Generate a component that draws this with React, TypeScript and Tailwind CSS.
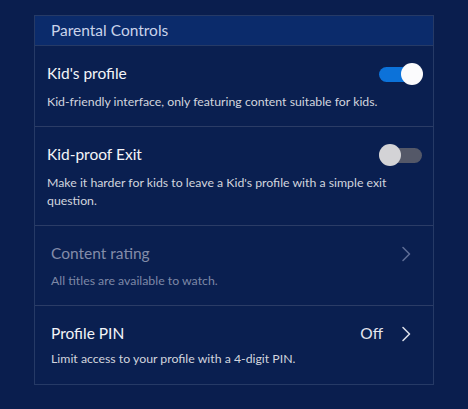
import React from "react";

function Chevron({ dim }: { dim?: boolean }) {
  return (
    <svg width="10" height="16" viewBox="0 0 10 16" fill="none" className="shrink-0">
      <path d="M2 1.5 L8.5 8 L2 14.5" stroke={dim ? "#5d6c94" : "#d9dce6"} strokeWidth="1.6" strokeLinecap="round" strokeLinejoin="round" />
    </svg>
  );
}

function Toggle({ on }: { on: boolean }) {
  return (
    <div className="relative w-[44px] h-[22px] shrink-0">
      <div className={`absolute left-0 right-[1px] top-[4px] h-[15px] rounded-full ${on ? "bg-[#0c72d9]" : "bg-[#545868]"}`} />
      <div className={`absolute top-0 w-[22px] h-[22px] rounded-full ${on ? "right-0 bg-[#fbfbfd]" : "left-0 bg-[#d3d3d6]"}`} />
    </div>
  );
}

export default function App() {
  return (
    <div className="w-[468px] h-[409px] bg-[#0a1e4e] pt-[15px] pl-[34px]" style={{ fontFamily: "Lato, 'Noto Sans', sans-serif" }}>
      <div className="w-[400px] border border-[#263a66] bg-[#0a1f50]">
        <div className="h-[30px] bg-[#0b2b6b] border-b border-[#263a66] flex items-center pl-[16px] text-[15.5px] text-[#c9d3ea]">
          Parental Controls
        </div>
        <div className="h-[81px] border-b border-[#2b3c66] pl-[12px] pr-[10px] pt-[18px]">
          <div className="flex items-center justify-between h-[20px]">
            <span className="text-[15.5px] text-[#f4f5f8]">Kid's profile</span>
            <Toggle on={true} />
          </div>
          <div className="mt-[9px] text-[12.3px] leading-[18px] text-[#d2d5de]">
            Kid-friendly interface, only featuring content suitable for kids.
          </div>
        </div>
        <div className="h-[99px] border-b border-[#2b3c66] pl-[12px] pr-[10px] pt-[18px]">
          <div className="flex items-center justify-between h-[20px]">
            <span className="text-[15.5px] text-[#f4f5f8]">Kid-proof Exit</span>
            <Toggle on={false} />
          </div>
          <div className="mt-[9px] text-[12.3px] leading-[18px] text-[#d2d5de] pr-[30px]">
            Make it harder for kids to leave a Kid's profile with a simple exit question.
          </div>
        </div>
        <div className="h-[80px] border-b border-[#2b3c66] pl-[16px] pr-[22px] pt-[18px]">
          <div className="flex items-center justify-between h-[20px]">
            <span className="text-[15.5px] text-[#838ca9]">Content rating</span>
            <Chevron dim />
          </div>
          <div className="mt-[8px] text-[12.3px] leading-[18px] text-[#7e88a6]">
            All titles are available to watch.
          </div>
        </div>
        <div className="h-[78px] pl-[16px] pr-[22px] pt-[18px]">
          <div className="flex items-center justify-between h-[20px]">
            <span className="text-[15.5px] text-[#f4f5f8]">Profile PIN</span>
            <div className="flex items-center gap-[18px]">
              <span className="text-[15.5px] text-[#e4e6ee]">Off</span>
              <Chevron />
            </div>
          </div>
          <div className="mt-[6px] text-[12.3px] leading-[18px] text-[#d2d5de]">
            Limit access to your profile with a 4-digit PIN.
          </div>
        </div>
      </div>
    </div>
  );
}
